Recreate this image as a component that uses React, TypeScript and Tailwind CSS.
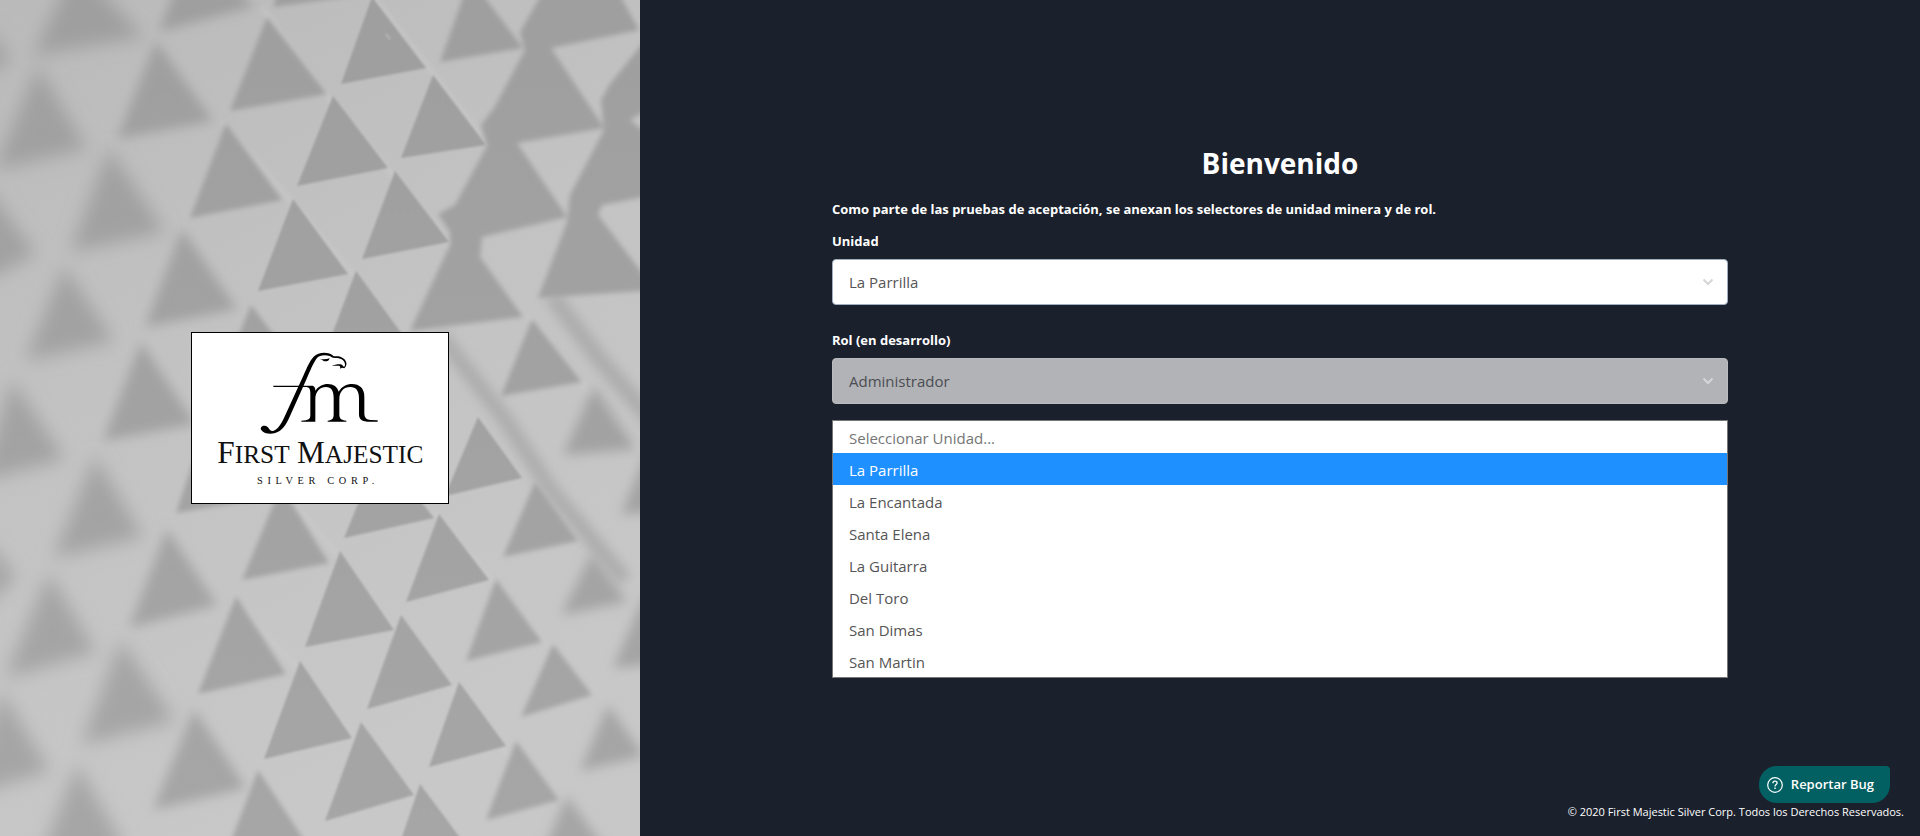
import { useState } from 'react';

type Shape = { blur: 'sharp' | 'mild' | 'soft' | 'heavy'; points: string };

const SHAPES: Shape[] = [
  { blur: 'heavy', points: '53,52 32,58 76,-36 144,37' },
  { blur: 'heavy', points: '38,66 87,149 -6,170' },
  { blur: 'heavy', points: '109,148 165,232 70,252' },
  { blur: 'heavy', points: '-15,185 36,254 -25,286' },
  { blur: 'heavy', points: '64,266 114,341 25,361' },
  { blur: 'heavy', points: '12,380 65,459 -20,481' },
  { blur: 'heavy', points: '95,456 143,537 53,558' },
  { blur: 'heavy', points: '-14,540 16,577 -14,606' },
  { blur: 'heavy', points: '49,573 96,652 5,678' },
  { blur: 'heavy', points: '121,640 175,721 81,745' },
  { blur: 'heavy', points: '1,691 50,771 -34,796' },
  { blur: 'heavy', points: '77,764 126,849 37,866' },
  { blur: 'heavy', points: '-12,26 10,60 -12,76' },
  { blur: 'soft', points: '189,-50 255,6 159,32' },
  { blur: 'soft', points: '156,41 213,121 117,139' },
  { blur: 'soft', points: '182,229 237,309 145,327' },
  { blur: 'soft', points: '141,342 195,424 103,441' },
  { blur: 'soft', points: '167,529 217,605 129,628' },
  { blur: 'soft', points: '194,709 246,788 153,810' },
  { blur: 'soft', points: '594,386 636,449 563,455' },
  { blur: 'soft', points: '592,553 627,602 561,615' },
  { blur: 'soft', points: '608,705 644,756 580,771' },
  { blur: 'soft', points: '650,446 662,512 621,514' },
  { blur: 'soft', points: '646,592 662,664 613,668' },
  { blur: 'soft', points: '567,796 609,854 538,864' },
  { blur: 'mild', points: '285,-30 360,-5 273,7' },
  { blur: 'mild', points: '267,17 327,94 230,111' },
  { blur: 'mild', points: '226,123 282,200 190,218' },
  { blur: 'mild', points: '251,305 308,380 214,397' },
  { blur: 'mild', points: '205,426 253,500 176,513' },
  { blur: 'mild', points: '281,486 329,563 242,580' },
  { blur: 'mild', points: '236,596 286,674 198,694' },
  { blur: 'mild', points: '258,770 312,852 220,870' },
  { blur: 'mild', points: '532,319 582,382 501,396' },
  { blur: 'mild', points: '535,482 578,541 503,557' },
  { blur: 'mild', points: '553,644 592,695 521,717' },
  { blur: 'mild', points: '516,741 559,800 486,820' },
  { blur: 'mild', points: '496,579 542,642 466,661' },
  { blur: 'mild', points: '470,-22 523,48 440,62' },
  {
    blur: 'mild',
    points:
      '543,-8 618,-8 639,30 551,48 604,128 517,143 567,217 482,237 480,257 523,317 410,331 450,245 450,232 438,214 455,205 487,146 481,125 494,108 525,50 520,32',
  },
  {
    blur: 'mild',
    points:
      '655,28 610,84 601,100 604,130 570,195 567,222 538,298 655,290 655,290 598,215 602,205 655,195 655,140 630,120 655,106',
  },
  { blur: 'sharp', points: '372,-3 426,68 341,84' },
  { blur: 'sharp', points: '333,96 388,168 297,186' },
  { blur: 'sharp', points: '433,75 486,145 401,158' },
  { blur: 'sharp', points: '395,171 449,242 362,259' },
  { blur: 'sharp', points: '293,199 348,274 258,291' },
  { blur: 'sharp', points: '356,271 410,345 322,361' },
  { blur: 'sharp', points: '380,450 434,518 344,538' },
  { blur: 'sharp', points: '478,417 522,478 445,496' },
  { blur: 'sharp', points: '439,514 489,580 406,602' },
  { blur: 'sharp', points: '340,551 394,630 305,647' },
  { blur: 'sharp', points: '401,615 452,685 367,709' },
  { blur: 'sharp', points: '300,661 352,738 264,759' },
  { blur: 'sharp', points: '459,682 506,746 429,767' },
  { blur: 'sharp', points: '361,722 414,795 325,821' },
  { blur: 'sharp', points: '420,784 470,851 390,872' },
];

const BLURS: { id: Shape['blur']; deviation: number }[] = [
  { id: 'heavy', deviation: 9 },
  { id: 'soft', deviation: 6 },
  { id: 'mild', deviation: 2.6 },
  { id: 'sharp', deviation: 1 },
];

function Backdrop() {
  return (
    <svg
      className="absolute inset-0 h-full w-full"
      viewBox="0 0 640 836"
      preserveAspectRatio="xMidYMid slice"
      aria-hidden="true"
    >
      <defs>
        <linearGradient id="wall" x1="0" y1="0" x2="0.4" y2="1">
          <stop offset="0" stopColor="#bababa" />
          <stop offset="0.5" stopColor="#c3c3c3" />
          <stop offset="1" stopColor="#c8c8c8" />
        </linearGradient>
        <linearGradient id="facet" gradientUnits="userSpaceOnUse" x1="0" y1="0" x2="0" y2="836">
          <stop offset="0" stopColor="#9f9f9f" />
          <stop offset="1" stopColor="#a6a6a6" />
        </linearGradient>
        {BLURS.map((b) => (
          <filter key={b.id} id={b.id} filterUnits="userSpaceOnUse" x="-60" y="-60" width="760" height="960">
            <feGaussianBlur stdDeviation={b.deviation} />
          </filter>
        ))}
      </defs>
      <rect width="640" height="836" fill="url(#wall)" />
      <g filter="url(#soft)" fill="none">
        <path d="M440 335L504 418L551 490L625 580" stroke="#acacac" strokeWidth="15" />
        <path d="M552 296L600 360L655 424" stroke="#acacac" strokeWidth="16" />
      </g>
      <g filter="url(#mild)" stroke="#cdcdcd" strokeWidth="4" fill="none" opacity="0.6">
        <path d="M262 8L330 100L392 174L452 250" />
        <path d="M368 -10L432 72L490 148" />
        <path d="M222 122L290 200L354 276" />
        <path d="M280 486L338 556L398 636L456 692L520 770" />
        <path d="M434 512L494 584L548 646" />
        <path d="M232 600L298 668L358 744L418 806" />
        <path d="M528 316L590 394L640 452" />
      </g>
      {BLURS.map((b) => (
        <g key={b.id} filter={`url(#${b.id})`} fill="url(#facet)">
          {SHAPES.filter((s) => s.blur === b.id).map((s) => (
            <polygon key={s.points} points={s.points} />
          ))}
        </g>
      ))}
      <path d="M386 34L390 39" stroke="#cbcbcb" strokeWidth="2" opacity="0.6" filter="url(#sharp)" />
    </svg>
  );
}

function Logo() {
  return (
    <div className="relative w-[258px] border border-black bg-white">
      <svg className="block w-full" viewBox="21 24 768 510" role="img" aria-label="First Majestic Silver Corp.">
        <path d="M442 90C427 80 400 81 386 95C374 107 366 128 356 150L300 272C288 300 275 317 262 318C252 318 252 303 239 302C229 301 225 309 229 315C236 326 255 328 268 325C292 318 303 300 314 275L362 168C376 136 386 112 396 99C404 90 420 88 436 94C441 99 447 99 456 99C470 100 480 108 480 119C480 122 479 124 477 126L471 119C463 116 451 118 440 123C450 123 460 121 465 124L466 131L471 128L478 130C484 124 486 116 483 110C479 99 464 93 453 94C448 94 445 94 442 90Z" />
        <path d="M404 101C414 104 424 103 434 100L432 104C428 110 416 110 412 105Z" />
        <path d="M265 182H383C389 184 391 188 391 197C400 184 414 177 428 177C446 177 457 186 461 200C470 185 485 177 501 177C524 177 538 191 538 214V264C538 279 545 284 557 285L578 286V290H546C529 289 522 282 522 268V220C522 197 513 186 496 186C476 186 463 200 463 222V268C463 281 468 286 484 287V290H428V287C442 286 446 281 446 268V220C446 197 439 186 423 186C405 186 391 200 391 222V290H349V287C371 286 376 283 376 270V205C376 192 373 186 362 186H265Z" />
        <g fontFamily="'Liberation Serif', serif" fill="#111">
          <text x="97" y="414" fontSize="76">
            <tspan fontSize="94">F</tspan>IRST
          </text>
          <text x="336" y="414" fontSize="76">
            <tspan fontSize="94">M</tspan>AJESTIC
          </text>
          <text x="216" y="476" fontSize="31" className="tracking-[0.45em]">
            SILVER CORP.
          </text>
        </g>
      </svg>
    </div>
  );
}

function Chevron() {
  return (
    <svg
      className="pointer-events-none absolute top-1/2 right-3.5 size-3 -translate-y-1/2"
      viewBox="0 0 12 12"
      fill="none"
      stroke="#d6d6d6"
      strokeWidth="2"
      aria-hidden="true"
    >
      <path d="M1.5 3.5L6 8L10.5 3.5" />
    </svg>
  );
}

const UNITS = ['La Parrilla', 'La Encantada', 'Santa Elena', 'La Guitarra', 'Del Toro', 'San Dimas', 'San Martin'];

export default function App() {
  const [unit, setUnit] = useState('La Parrilla');

  return (
    <div className="flex min-h-screen bg-[#1a202c] font-['Open_Sans',sans-serif] text-white">
      <aside className="relative flex w-1/3 items-center justify-center overflow-hidden bg-[#c2c2c2]">
        <Backdrop />
        <Logo />
      </aside>

      <div className="flex w-2/3 flex-col">
        <main className="mx-auto w-[70%] flex-1 pt-[145px]">
          <h1 className="text-center text-[28px] leading-9 font-bold">Bienvenido</h1>
          <form className="mt-5 text-[13px] leading-4 font-bold">
            <p>Como parte de las pruebas de aceptación, se anexan los selectores de unidad minera y de rol.</p>

            <label htmlFor="unit" className="mt-4 block">
              Unidad
            </label>
            <div className="relative mt-2.5">
              <select
                id="unit"
                value={unit}
                onChange={(e) => setUnit(e.target.value)}
                className="block h-[46px] w-full appearance-none rounded border border-[#a0aec0] bg-white px-4 text-[15px] font-normal text-[#555]"
              >
                {UNITS.map((u) => (
                  <option key={u}>{u}</option>
                ))}
              </select>
              <Chevron />
            </div>

            <label htmlFor="role" className="mt-[27px] block">
              Rol (en desarrollo)
            </label>
            <div className="relative mt-2.5">
              <select
                id="role"
                disabled
                className="block h-[46px] w-full appearance-none rounded border border-[#b9bbbe] bg-[#b2b3b7] px-4 text-[15px] font-normal text-[#4b4d52] opacity-100"
              >
                <option>Administrador</option>
              </select>
              <Chevron />
            </div>

            <div
              role="listbox"
              aria-label="Unidad"
              className="mt-4 flex flex-col border border-[#767676] bg-white text-[15px] font-normal text-[#555]"
            >
              <button
                type="button"
                role="option"
                aria-selected={false}
                disabled
                className="h-8 px-4 pt-0.5 text-left text-[#757575]"
              >
                Seleccionar Unidad...
              </button>
              {UNITS.map((u) => (
                <button
                  key={u}
                  type="button"
                  role="option"
                  aria-selected={u === unit}
                  onClick={() => setUnit(u)}
                  className="h-8 px-4 pt-0.5 text-left aria-selected:bg-[#1e90ff] aria-selected:text-white"
                >
                  {u}
                </button>
              ))}
            </div>
          </form>
        </main>

        <footer className="flex flex-col items-end px-4 pb-4">
          <button
            type="button"
            className="mr-3.5 flex h-[37px] items-center gap-2 rounded-[18px] rounded-tr bg-[#036062] pr-4 pl-2 text-[13px] font-semibold"
          >
            <svg className="size-4" viewBox="0 0 16 16" fill="none" stroke="currentColor" aria-hidden="true">
              <circle cx="8" cy="8" r="7.3" strokeWidth="1.2" />
              <path d="M5.9 6.3C5.9 5 6.8 4.2 8 4.2C9.2 4.2 10.1 5 10.1 6.1C10.1 7.5 8 7.6 8 9.4" strokeWidth="1.3" />
              <path d="M8 10.5V12" strokeWidth="1.4" />
            </svg>
            Reportar Bug
          </button>
          <small className="text-[11px] leading-[17px]">
            © 2020 First Majestic Silver Corp. Todos los Derechos Reservados.
          </small>
        </footer>
      </div>
    </div>
  );
}
